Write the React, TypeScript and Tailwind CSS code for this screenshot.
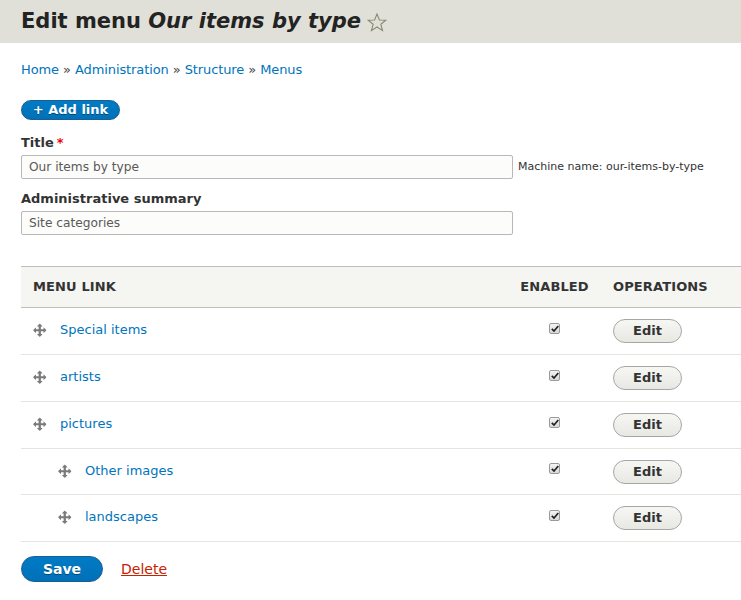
import React from "react";

const rows = [
  { label: "Special items", depth: 0, h: "h-[47px]" },
  { label: "artists", depth: 0, h: "h-[47px]" },
  { label: "pictures", depth: 0, h: "h-[47px]" },
  { label: "Other images", depth: 1, h: "h-[46px]" },
  { label: "landscapes", depth: 1, h: "h-[47px]" },
];

function DragHandle() {
  return (
    <svg width="14" height="14" viewBox="0 0 16 16" className="shrink-0">
      <path
        fill="#7a7a7a"
        d="M14.904,7.753l-2.373-2.372c-0.291-0.292-0.529-0.193-0.529,0.22v1.399h-3v-3h1.398c0.414,0,0.512-0.239,0.221-0.53L8.246,1.098c-0.292-0.292-0.77-0.292-1.062,0L4.81,3.47C4.519,3.761,4.617,4,5.031,4h1.4v3h-3V5.601c0-0.413-0.238-0.512-0.529-0.22L0.53,7.753c-0.292,0.292-0.292,0.77,0,1.062l2.372,2.371c0.291,0.292,0.529,0.193,0.529-0.219V9.566h3v3h-1.4c-0.414,0-0.512,0.238-0.221,0.529l2.374,2.373c0.292,0.29,0.77,0.29,1.062,0l2.373-2.373c0.291-0.291,0.193-0.529-0.221-0.529h-1.398v-3h3v1.4c0,0.412,0.238,0.511,0.529,0.219l2.373-2.371C15.194,8.523,15.194,8.045,14.904,7.753z"
      />
    </svg>
  );
}

function Check() {
  return (
    <span className="flex h-[11px] w-[11px] items-center justify-center rounded-[2px] border border-[#9a9a9a] bg-gradient-to-b from-[#f4f4f4] to-[#d8d8d8]">
      <svg width="8" height="7" viewBox="0 0 8 7">
        <path d="M0.8 3.8 L3 6 L7.3 1" stroke="#222" strokeWidth="1.7" fill="none" />
      </svg>
    </span>
  );
}

export default function App() {
  return (
    <div className="min-h-[600px] bg-white font-['DejaVu_Sans',sans-serif] text-[13px] text-[#333]">
      <header className="flex h-[43px] items-center bg-[#e0e0d8] px-[21px]">
        <h1 className="text-[21px] font-bold leading-none text-[#232323]">
          Edit menu <em>Our items by type</em>
        </h1>
        <svg width="20" height="19" viewBox="0 0 20 19" className="ml-[6px] mt-[1px]">
          <polygon
            points="10,1 12.4,7 18.8,7.2 13.8,11.2 15.5,17.6 10,14 4.5,17.6 6.2,11.2 1.2,7.2 7.6,7"
            fill="none"
            stroke="#8a8a70"
            strokeWidth="1.1"
          />
        </svg>
      </header>

      <div className="pl-[21px]">
        <nav className="mt-[18px] leading-[18px] text-[13px] tracking-[-0.1px]">
          <a className="text-[#0074bd]">Home</a> <span className="text-[#444]">»</span>{" "}
          <a className="text-[#0074bd]">Administration</a> <span className="text-[#444]">»</span>{" "}
          <a className="text-[#0074bd]">Structure</a> <span className="text-[#444]">»</span>{" "}
          <a className="text-[#0074bd]">Menus</a>
        </nav>

        <button className="mt-[21px] flex h-[20px] w-[99px] items-center justify-center rounded-full border border-[#1e5c90] bg-gradient-to-b from-[#007bc6] to-[#0071b8] text-[13px] font-bold text-white [text-shadow:0_1px_0_rgba(0,0,0,0.4)]">
          + Add link
        </button>

        <div className="mt-[14px]">
          <label className="block leading-[18px] font-bold text-[#333]">
            Title<span className="ml-[3px] text-[#e00]">*</span>
          </label>
          <div className="mt-[3px] flex items-center">
            <div className="flex h-[24px] w-[492px] items-center rounded-[2px] border border-[#b8b8b8] bg-[#fcfcfa] px-[7px] text-[12.2px] text-[#595959]">
              Our items by type
            </div>
            <span className="ml-[5px] text-[11px] text-[#333]">Machine name: our-items-by-type</span>
          </div>
        </div>

        <div className="mt-[11px]">
          <label className="block leading-[18px] font-bold text-[#333]">Administrative summary</label>
          <div className="mt-[3px] flex h-[24px] w-[492px] items-center rounded-[2px] border border-[#b8b8b8] bg-[#fcfcfa] px-[7px] text-[12.2px] text-[#595959]">
            Site categories
          </div>
        </div>

        <div className="mt-[31px]">
          <div className="grid h-[42px] grid-cols-[487px_93px_1fr] items-center border-y border-[#bfbfba] bg-[#f5f5f2] text-[13px] font-bold uppercase tracking-[0.01em] text-[#333]">
            <div className="pl-[12px]">Menu link</div>
            <div className="text-center">Enabled</div>
            <div className="pl-[12px]">Operations</div>
          </div>
          {rows.map((r) => (
            <div
              key={r.label}
              className={`grid ${r.h} grid-cols-[487px_93px_1fr] items-center border-b border-[#e6e4df]`}
            >
              <div className={`flex items-center pb-[2px] ${r.depth ? "pl-[37px]" : "pl-[12px]"}`}>
                <DragHandle />
                <a className="ml-[13px] text-[13px] text-[#0074bd]">{r.label}</a>
              </div>
              <div className="flex justify-center pb-[6px]">
                <Check />
              </div>
              <div className="pl-[12px]">
                <button className="flex h-[24px] w-[69px] items-center justify-center rounded-full border border-[#a6a6a6] bg-gradient-to-b from-[#f6f6f3] to-[#e8e8e3] text-[13px] font-bold text-[#333]">
                  Edit
                </button>
              </div>
            </div>
          ))}
        </div>

        <div className="mt-[14px] flex items-center">
          <button className="flex h-[26px] w-[82px] items-center justify-center rounded-full border border-[#1e5c90] bg-gradient-to-b from-[#007bc6] to-[#0071b8] text-[14px] font-bold text-white [text-shadow:0_1px_0_rgba(0,0,0,0.4)]">
            Save
          </button>
          <a className="ml-[18px] text-[14px] text-[#c72100] underline">Delete</a>
        </div>
      </div>
    </div>
  );
}
